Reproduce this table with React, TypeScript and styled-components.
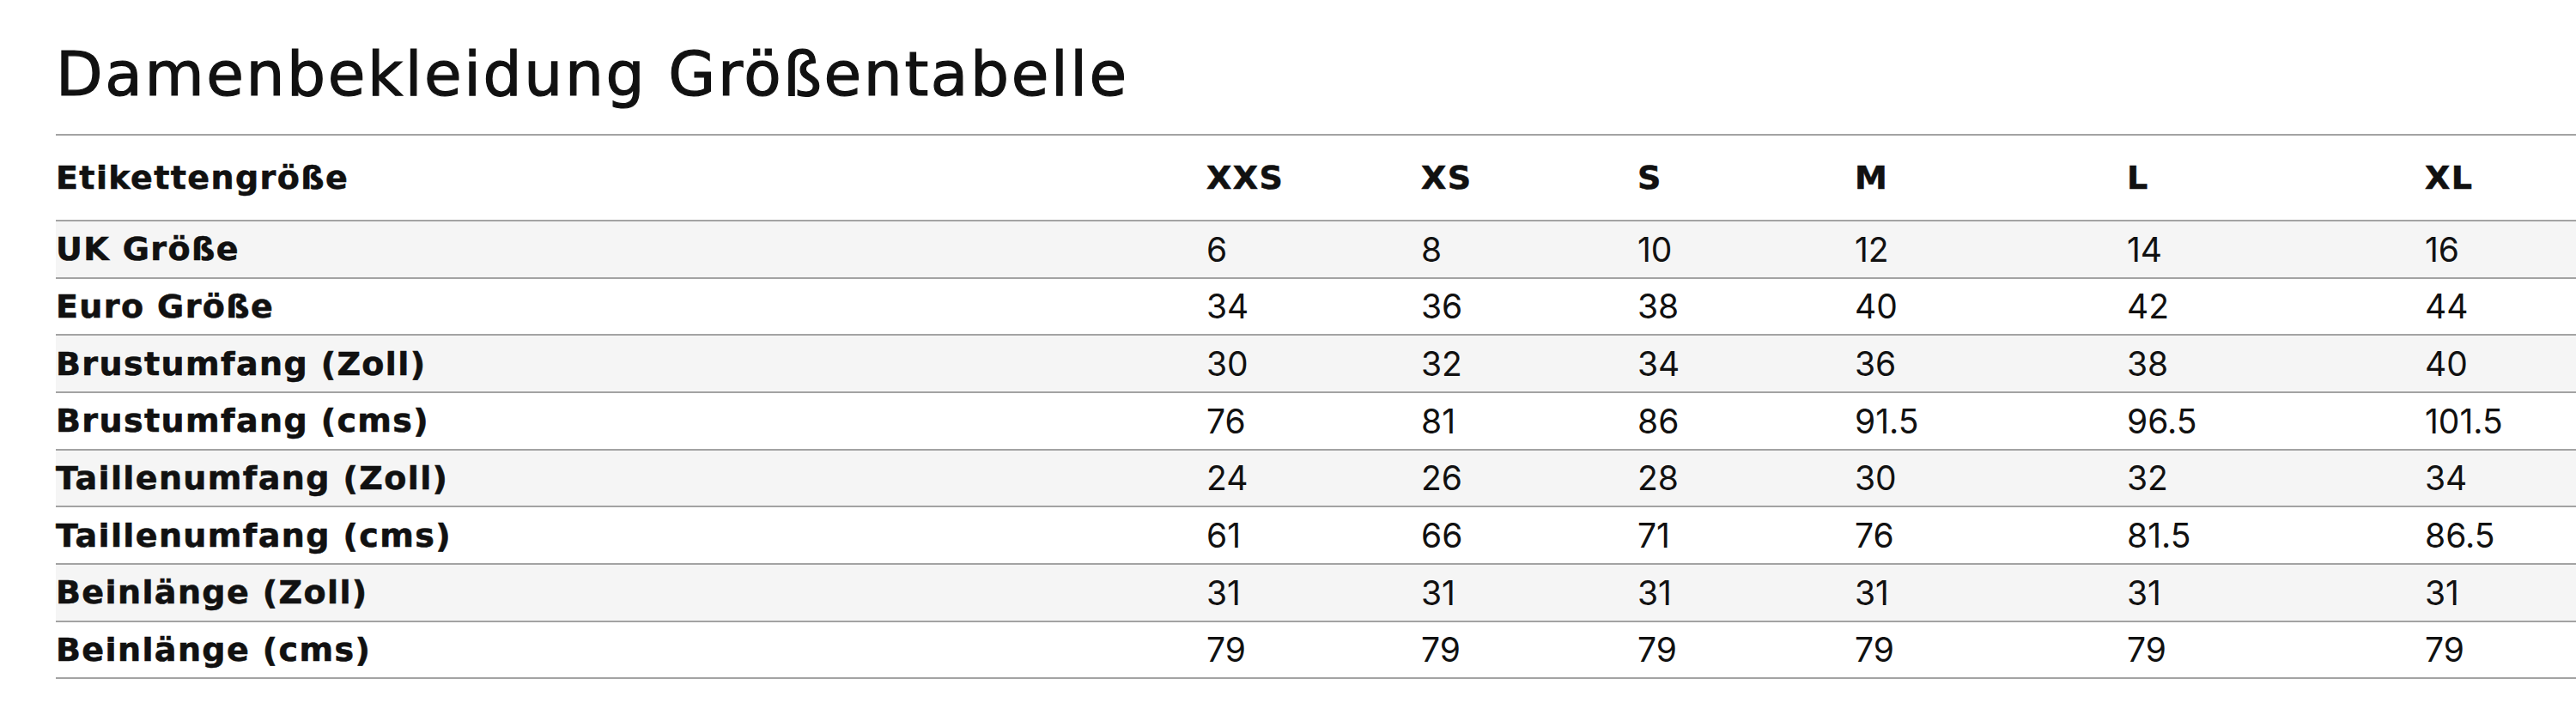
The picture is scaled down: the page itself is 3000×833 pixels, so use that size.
import styled, { createGlobalStyle } from 'styled-components';

const GlobalStyle = createGlobalStyle`
  html, body {
    margin: 0;
    padding: 0;
    background: #ffffff;
  }
  body {
    font-family: "DejaVu Sans", "Noto Sans", "Liberation Sans", sans-serif;
    color: #111111;
  }
`;

const Page = styled.div`
  padding: 44px 0 0 65px;
  width: 3000px;
  box-sizing: border-box;
`;

const Title = styled.h1`
  margin: 0 0 26px 0;
  font-size: 71px;
  line-height: 86px;
  font-weight: 400;
  letter-spacing: 2.6px;
  -webkit-text-stroke: 1.2px #111111;
  color: #111111;
`;

const Table = styled.table`
  width: 2935px;
  border-collapse: collapse;
  table-layout: fixed;
  border-top: 2px solid #a3a3a3;
`;

const Row = styled.tr<{ $striped?: boolean }>`
  background: ${(p) => (p.$striped ? '#f5f5f5' : '#ffffff')};
  border-bottom: 2px solid #a3a3a3;
`;

const HeadCell = styled.th<{ $height: number }>`
  height: ${(p) => p.$height}px;
  padding: 0;
  text-align: left;
  vertical-align: middle;
  font-size: 38px;
  font-weight: 700;
  letter-spacing: 1.4px;
  -webkit-text-stroke: 0.6px #111111;
  white-space: nowrap;
`;

const ValueCell = styled.td`
  padding: 0;
  text-align: left;
  vertical-align: middle;
  font-family: Inter, "DejaVu Sans", sans-serif;
  font-size: 39px;
  font-weight: 400;
  white-space: nowrap;
`;

const sizes = ['XXS', 'XS', 'S', 'M', 'L', 'XL'];
const widths = [1340, 250, 252, 253, 317, 347, 176];

const rows: [string, string[]][] = [
  ['UK Größe', ['6', '8', '10', '12', '14', '16']],
  ['Euro Größe', ['34', '36', '38', '40', '42', '44']],
  ['Brustumfang (Zoll)', ['30', '32', '34', '36', '38', '40']],
  ['Brustumfang (cms)', ['76', '81', '86', '91.5', '96.5', '101.5']],
  ['Taillenumfang (Zoll)', ['24', '26', '28', '30', '32', '34']],
  ['Taillenumfang (cms)', ['61', '66', '71', '76', '81.5', '86.5']],
  ['Beinlänge (Zoll)', ['31', '31', '31', '31', '31', '31']],
  ['Beinlänge (cms)', ['79', '79', '79', '79', '79', '79']],
];

const App = () => {
  return (
    <>
      <GlobalStyle />
      <Page>
        <Title>Damenbekleidung Größentabelle</Title>
        <Table>
          <colgroup>
            {widths.map((w, i) => (
              <col key={i} style={{ width: w }} />
            ))}
          </colgroup>
          <thead>
            <Row>
              <HeadCell $height={98}>Etikettengröße</HeadCell>
              {sizes.map((s) => (
                <HeadCell key={s} $height={98}>{s}</HeadCell>
              ))}
              <HeadCell $height={98} />
            </Row>
          </thead>
          <tbody>
            {rows.map(([label, values], i) => (
              <Row key={label} $striped={i % 2 === 0}>
                <HeadCell $height={64.67}>{label}</HeadCell>
                {values.map((v, j) => (
                  <ValueCell key={j}>{v}</ValueCell>
                ))}
                <ValueCell />
              </Row>
            ))}
          </tbody>
        </Table>
      </Page>
    </>
  );
};

export default App;
